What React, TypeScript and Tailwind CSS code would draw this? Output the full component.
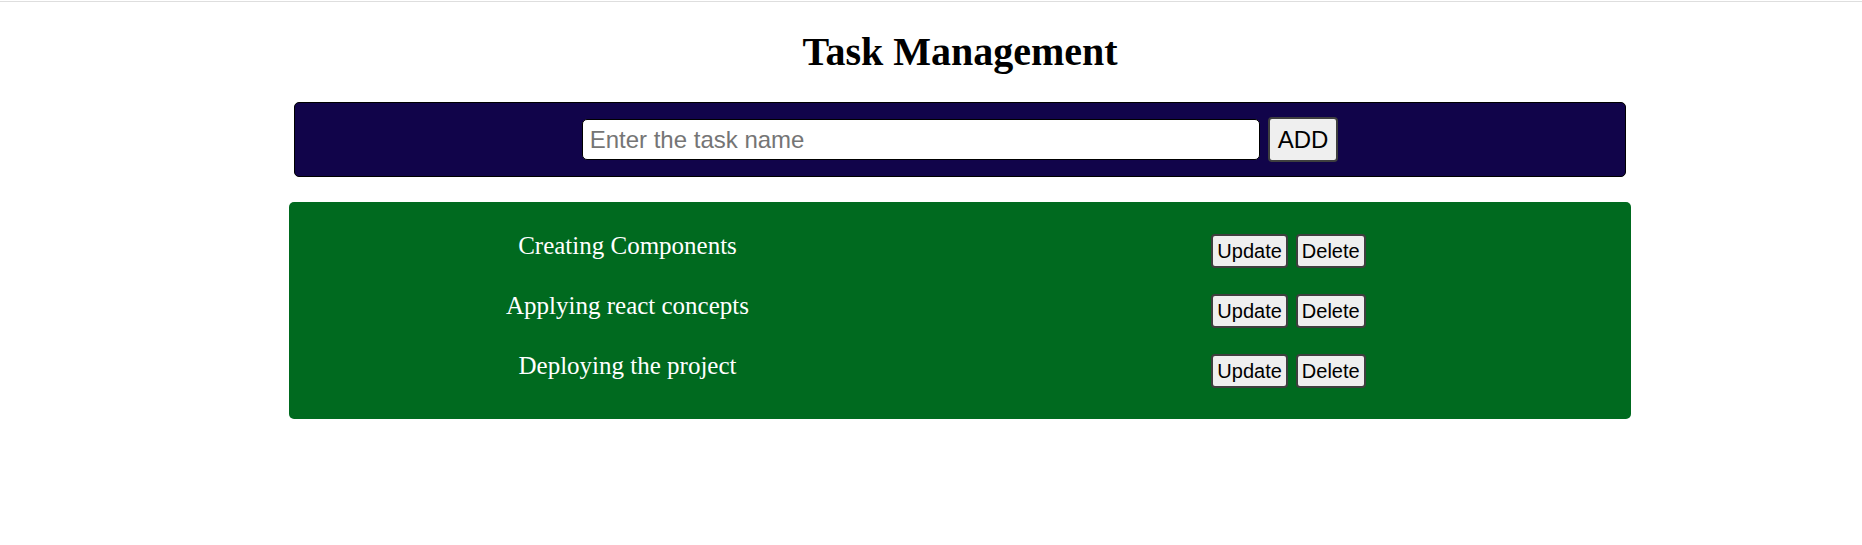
import React, { useState } from "react";

const initialTasks = [
  "Creating Components",
  "Applying react concepts",
  "Deploying the project",
];

function TaskRow({ name }: { name: string }) {
  return (
    <div className="grid grid-cols-2 h-[60px]">
      <div className="flex items-center justify-center">
        <span className="mb-[10px] text-[25px] text-white">{name}</span>
      </div>
      <div className="flex items-center justify-center gap-2">
        <button className="h-[34px] px-1 bg-[#efefef] border-2 border-[#3f3f3f] rounded-[4px] text-[20px] text-black font-['Liberation_Sans',Arial,sans-serif] leading-none">
          Update
        </button>
        <button className="h-[34px] px-1 bg-[#efefef] border-2 border-[#3f3f3f] rounded-[4px] text-[20px] text-black font-['Liberation_Sans',Arial,sans-serif] leading-none">
          Delete
        </button>
      </div>
    </div>
  );
}

export default function App() {
  const [task, setTask] = useState("");
  const [tasks] = useState(initialTasks);

  return (
    <div className="min-h-[545px] bg-white font-['Liberation_Serif','Times_New_Roman',serif]">
      <div className="pt-px">
        <div className="h-px bg-[#dedede]"></div>
      </div>

      <div className="flex flex-col items-center pl-[58px]">
        {/* Heading */}
        <h1 className="mt-[27px] text-[40px] font-bold leading-[46px] text-black">
          Task Management
        </h1>

        {/* Add task bar */}
        <div className="mt-[27px] w-[1332px] h-[75px] flex items-center justify-center gap-2 bg-[#11044a] border border-black rounded-[5px]">
          <input
            value={task}
            onChange={(e) => setTask(e.target.value)}
            placeholder="Enter the task name"
            className="w-[678px] h-[41px] px-[7px] bg-white border border-black rounded-[5px] text-[24px] text-black placeholder:text-[#757575] outline-none font-['Liberation_Sans',Arial,sans-serif]"
          />
          <button className="h-[45px] px-[8px] bg-[#efefef] border-2 border-[#3f3f3f] rounded-[4px] text-[24px] text-black font-['Liberation_Sans',Arial,sans-serif] leading-none">
            ADD
          </button>
        </div>

        {/* Task list */}
        <div className="mt-[25px] w-[1342px] pl-[8px] pr-[12px] pt-[19px] pb-[18px] bg-[#006a1f] rounded-[5px]">
          {tasks.map((t) => (
            <TaskRow key={t} name={t} />
          ))}
        </div>
      </div>
    </div>
  );
}
